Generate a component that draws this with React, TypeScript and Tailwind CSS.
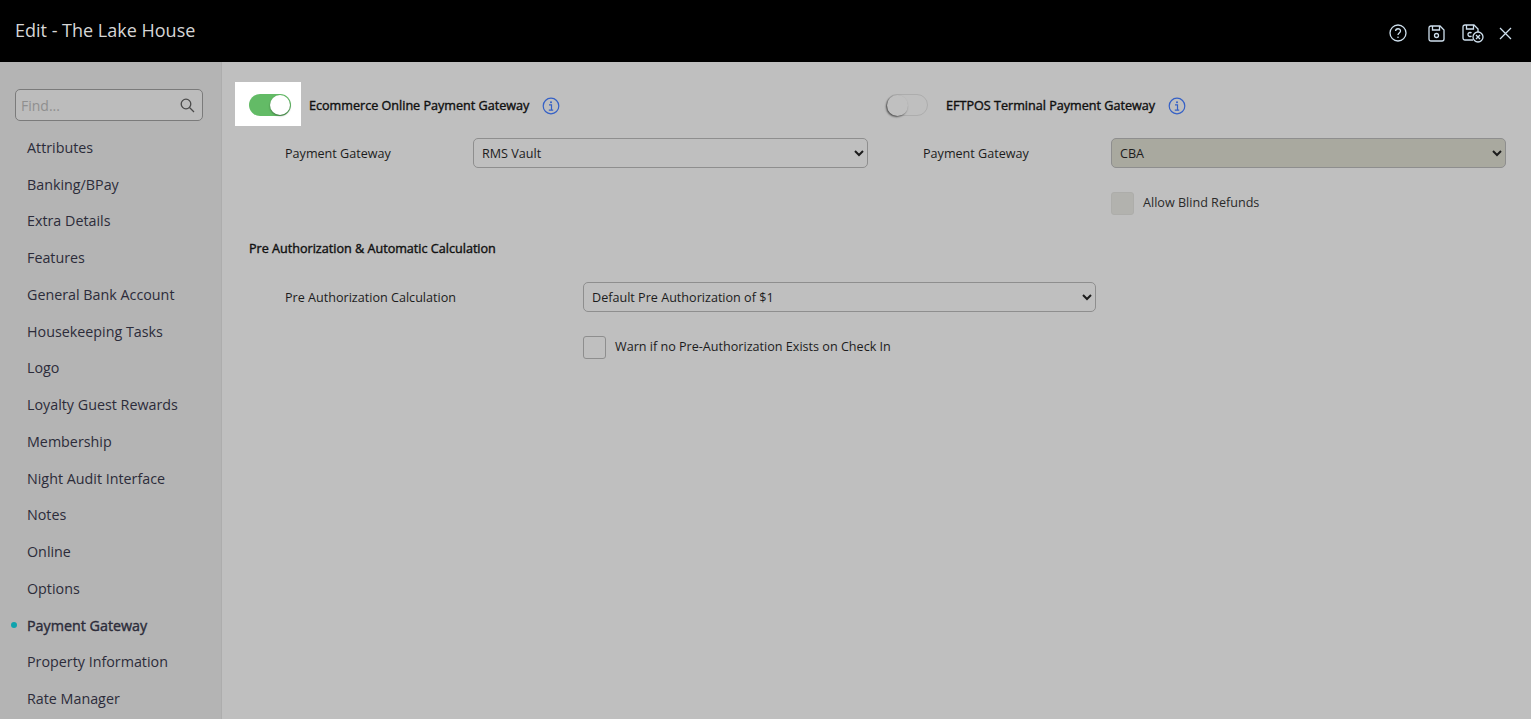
import React from "react";

const items = ["Attributes","Banking/BPay","Extra Details","Features","General Bank Account","Housekeeping Tasks","Logo","Loyalty Guest Rewards","Membership","Night Audit Interface","Notes","Online","Options","Payment Gateway","Property Information","Rate Manager"];

function Info() {
  return (
    <svg width="18" height="18" viewBox="0 0 18 18" fill="none" stroke="#3560c6" strokeWidth="1.2" className="shrink-0">
      <circle cx="9" cy="9" r="7.8" />
      <circle cx="9" cy="5.2" r="1" fill="#3560c6" stroke="none" />
      <path d="M7 7.800H9.500V13M6.800 13.200H11.200" />
    </svg>
  );
}

function Sel({ value, className }: { value: string; className: string }) {
  return (
    <select defaultValue={value} className={"h-[30px] rounded-[5px] border border-[#8e8e8e] pl-[4px] text-[12.6px] text-[#1c1c1c] outline-none " + className}>
      <option>{value}</option>
    </select>
  );
}

export default function App() {
  return (
    <div className="flex h-[719px] w-[1531px] flex-col overflow-hidden bg-[#bfbfbf] font-['Open_Sans',sans-serif]">
      <header className="flex h-[62px] shrink-0 items-center justify-between bg-black pl-[15px] pr-[19px]">
        <h1 className="mb-[2px] text-[18px] font-normal text-[#d6d6d6]">Edit - The Lake House</h1>
        <div className="mt-[4px] flex items-center text-[#cfe0ee]">
          <svg width="18" height="18" viewBox="0 0 18 18" fill="none" stroke="currentColor" strokeWidth="1.3">
            <circle cx="9" cy="9" r="8" />
            <path d="M6.600 7.100C6.600 3.900 11.500 4 11.500 7C11.500 9 9 9 9 11" />
            <circle cx="9" cy="13.300" r="0.800" fill="currentColor" stroke="none" />
          </svg>
          <svg className="ml-[21px]" width="17" height="17" viewBox="0 0 17 17" fill="none" stroke="currentColor" strokeWidth="1.3">
            <path d="M1 3C1 1.800 1.800 1 3 1H12L16 5V14C16 15.200 15.200 16 14 16H3C1.800 16 1 15.200 1 14Z" />
            <path d="M4.500 1V5H11.500V1" />
            <circle cx="8.500" cy="10.500" r="2" />
          </svg>
          <svg className="ml-[17px]" width="22" height="19" viewBox="0 0 22 19" fill="none" stroke="currentColor" strokeWidth="1.3">
            <path d="M11 16H3C1.800 16 1 15.200 1 14V3C1 1.800 1.800 1 3 1H12L16 5V8" />
            <path d="M4.500 1V5H11.500V1" />
            <path d="M9.500 9.200A2 2 0 1 0 9.500 11.800" />
            <circle cx="16" cy="13" r="5" />
            <path d="M14 11L18 15M18 11L14 15" />
          </svg>
          <svg className="ml-[15px]" width="13" height="13" viewBox="0 0 13 13" fill="none" stroke="currentColor" strokeWidth="1.3">
            <path d="M1 1L12 12M12 1L1 12" />
          </svg>
        </div>
      </header>
      <div className="flex min-h-0 flex-1">
        <aside className="w-[222px] shrink-0 overflow-hidden border-r border-[#adadad] bg-[#b4b4b4] pl-[15px] pr-[18px] pt-[27px]">
          <div className="flex h-[32px] items-center justify-between rounded-[5px] border border-[#7b7b7b] bg-[#bcbcbc] pl-[5px] pr-[7px]">
            <span className="text-[14px] text-[#8f8f8f]">Find...</span>
            <svg width="15" height="15" viewBox="0 0 15 15" fill="none" stroke="#4a4a4a" strokeWidth="1.300">
              <circle cx="6" cy="6" r="4.800" />
              <path d="M9.500 9.500L14 14" />
            </svg>
          </div>
          <nav className="mt-[8.300px]">
            {items.map((t) => {
              const active = t === "Payment Gateway";
              return (
                <div key={t} className={"relative flex h-[36.750px] items-center pl-[12px] text-[14.300px] text-[#2c2c3a] " + (active ? "[-webkit-text-stroke:0.4px_#2c2c3a]" : "")}>
                  {active && <span className="absolute left-[-4.500px] top-[15px] size-[6px] rounded-full bg-[#0fa3ad]" />}
                  {t}
                </div>
              );
            })}
          </nav>
        </aside>
        <main className="min-w-0 flex-1 pl-[27px] pr-[25px] pt-[20px]">
          <div className="grid grid-cols-[637px_1fr]">
            <section>
              <div className="flex h-[46px] items-center">
                <div className="-ml-[14px] flex h-[44px] w-[66px] items-center self-start bg-white pl-[14px] pt-[2px]">
                  <div className="flex h-[22px] w-[42px] items-center justify-end rounded-full bg-[#63bb66] pr-px">
                    <span className="size-[20px] rounded-full bg-white shadow-[0_1px_2px_rgba(0,0,0,0.4)]" />
                  </div>
                </div>
                <span className="ml-[8px] pt-[2px] text-[12.600px] text-[#111] [-webkit-text-stroke:0.4px_#111]">Ecommerce Online Payment Gateway</span>
                <span className="ml-[13px] pt-px"><Info /></span>
              </div>
              <div className="mt-[10px] flex h-[30px] items-center">
                <label className="ml-[36px] w-[188px] pt-[3px] text-[12.600px] text-[#1c1c1c]">Payment Gateway</label>
                <Sel value="RMS Vault" className="w-[395px] bg-[#bfbfbf]" />
              </div>
            </section>
            <section>
              <div className="flex h-[46px] items-center">
                <div className="flex h-[22px] w-[42px] items-center rounded-full border border-[#adadad] bg-[#bfbfbf]">
                  <span className="size-[21px] rounded-full bg-[#c0c0c0] shadow-[-1px_1px_2px_rgba(0,0,0,0.6)]" />
                </div>
                <span className="ml-[18px] pt-[2px] text-[12.600px] text-[#111] [-webkit-text-stroke:0.4px_#111]">EFTPOS Terminal Payment Gateway</span>
                <span className="ml-[13px] pt-px"><Info /></span>
              </div>
              <div className="mt-[10px] flex h-[30px] items-center">
                <label className="ml-[37px] w-[188px] pt-[3px] text-[12.600px] text-[#1c1c1c]">Payment Gateway</label>
                <Sel value="CBA" className="w-[395px] bg-[#a9a99f]" />
              </div>
              <div className="ml-[225px] mt-[24px] flex items-center">
                <span className="size-[23px] rounded-[3px] border border-[#adadaa] bg-[#b2b2ae]" />
                <span className="ml-[9px] text-[12.600px] text-[#2a2a2a]">Allow Blind Refunds</span>
              </div>
            </section>
          </div>
          <h2 className="mt-[25px] h-[19px] text-[12.600px] font-normal text-[#111] [-webkit-text-stroke:0.4px_#111]">Pre Authorization &amp; Automatic Calculation</h2>
          <div className="mt-[23px] flex h-[30px] items-center">
            <label className="ml-[36px] w-[298px] pt-[3px] text-[12.600px] text-[#1c1c1c]">Pre Authorization Calculation</label>
            <Sel value="Default Pre Authorization of $1" className="w-[513px] bg-[#bfbfbf]" />
          </div>
          <div className="ml-[334px] mt-[24px] flex items-center">
            <span className="size-[23px] rounded-[3px] border border-[#8e8e8e] bg-[#bfbfbf]" />
            <span className="ml-[9px] text-[12.600px] text-[#1c1c1c]">Warn if no Pre-Authorization Exists on Check In</span>
          </div>
        </main>
      </div>
    </div>
  );
}
